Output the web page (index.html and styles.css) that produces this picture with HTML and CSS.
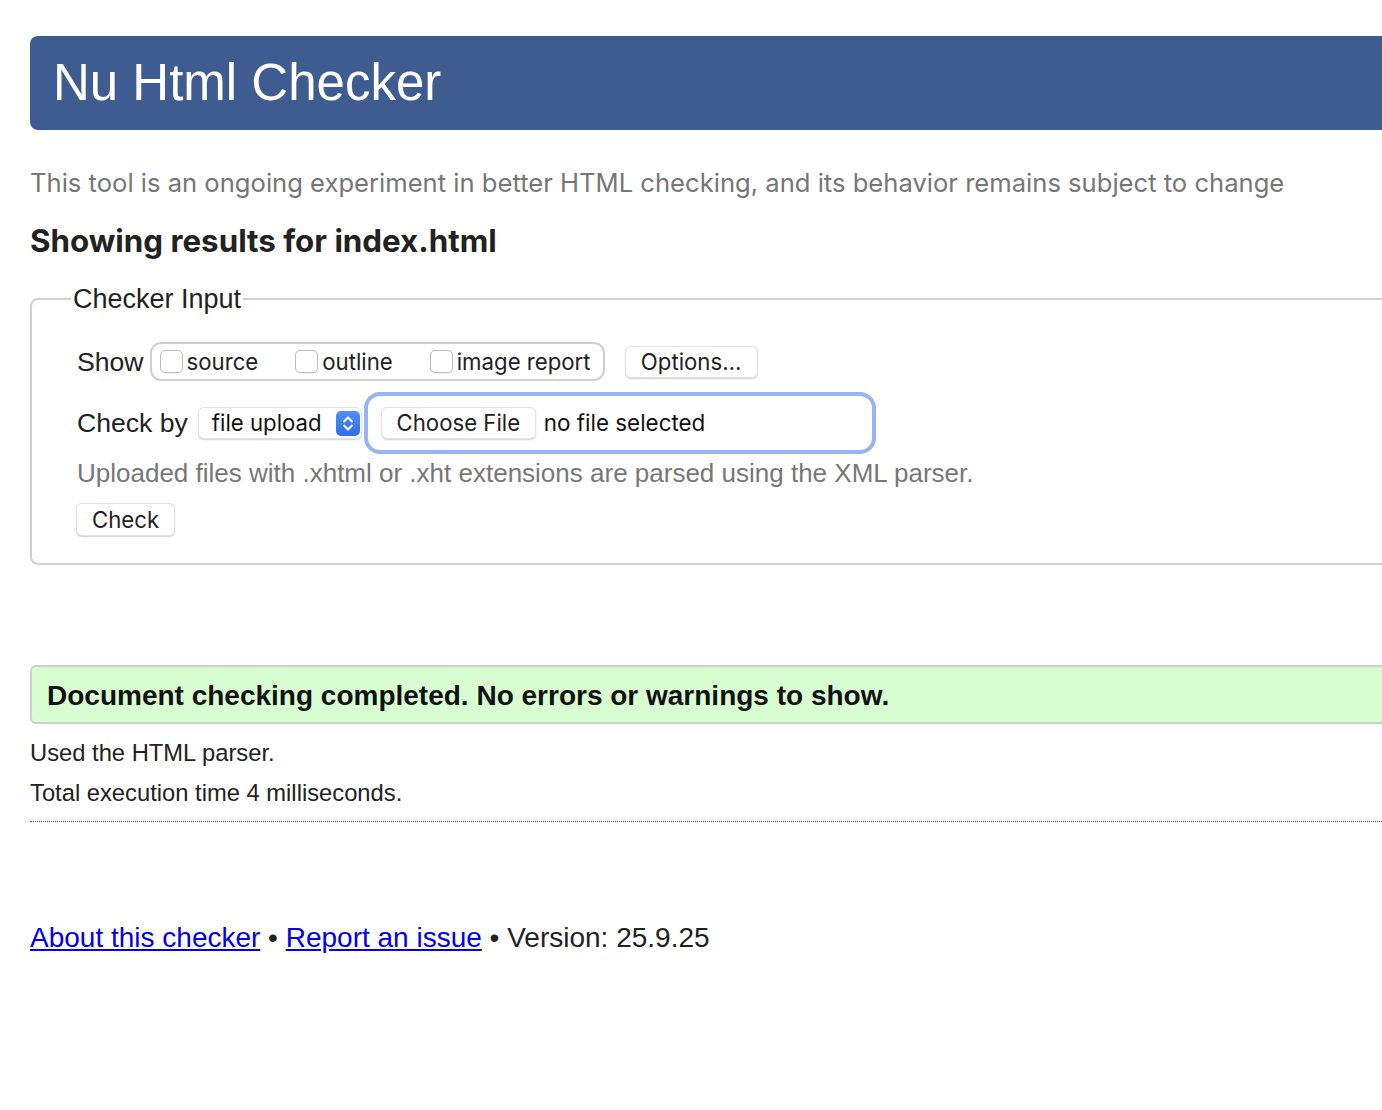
FILE: index.html
```html
<!DOCTYPE html>
<html lang="en">
<head>
<meta charset="utf-8">
<title>Nu Html Checker</title>
<link rel="stylesheet" href="styles.css">
</head>
<body>
<header class="banner"><h1 class="banner-title">Nu Html Checker</h1></header>
<p class="intro">This tool is an ongoing experiment in better HTML checking, and its behavior remains subject to change</p>
<h2 class="results-title">Showing results for index.html</h2>
<form class="checker-form">
  <fieldset class="checker-input">
    <legend class="checker-legend">Checker Input</legend>
    <div class="row show-row">
      <span class="row-label">Show</span>
      <div class="show-group">
        <label class="opt"><input type="checkbox" class="cb">source</label>
        <label class="opt"><input type="checkbox" class="cb">outline</label>
        <label class="opt"><input type="checkbox" class="cb">image report</label>
      </div>
      <button type="button" class="mac-btn options-btn">Options…</button>
    </div>
    <div class="row checkby-row">
      <span class="row-label">Check by</span>
      <div class="mac-select">
        <span class="select-text">file upload</span>
        <span class="select-arrow">
          <svg width="24" height="25" viewBox="0 0 24 25"><path d="M8 10.5 L12 6.5 L16 10.5 M8 14.5 L12 18.5 L16 14.5" fill="none" stroke="#fff" stroke-width="2" stroke-linecap="round" stroke-linejoin="round"/></svg>
        </span>
      </div>
      <div class="file-ring">
        <span class="mac-btn choose-btn">Choose File</span>
        <span class="file-status">no file selected</span>
      </div>
    </div>
    <p class="hint">Uploaded files with .xhtml or .xht extensions are parsed using the XML parser.</p>
    <button type="button" class="mac-btn check-btn">Check</button>
  </fieldset>
</form>
<div class="success"><p class="success-text">Document checking completed. No errors or warnings to show.</p></div>
<p class="meta meta-first">Used the HTML parser.</p>
<p class="meta">Total execution time 4 milliseconds.</p>
<hr class="dotted-rule">
<p class="footer"><a href="#" class="footer-link">About this checker</a> • <a href="#" class="footer-link">Report an issue</a> • Version: 25.9.25</p>
</body>
</html>
```
FILE: styles.css
```css
html {
  overflow: hidden;
  background: #fff;
}
body {
  margin: 0;
  padding: 36px 0 0 30px;
  width: 1420px;
  font-family: "Liberation Sans", Arial, sans-serif;
  color: #222;
}
.banner {
  background: #3e5c8f;
  border-radius: 8px;
  height: 94px;
}
.banner-title {
  margin: 0;
  padding-left: 23px;
  font: 400 51px/94px "Liberation Sans", Arial, sans-serif;
  color: #fff;
}
.intro {
  margin: 38px 0 0;
  font: 400 25.6px/30px Inter, "Noto Sans", sans-serif;
  color: #767676;
}
.results-title {
  margin: 25px 0 0;
  font: 700 31.3px/36px Inter, "Noto Sans", sans-serif;
  color: #222;
}
.checker-form {
  margin: 25px 0 0;
}
.checker-input {
  margin: 0;
  border: 2px solid #cfcfcf;
  border-radius: 8px;
  padding: 28px 0 27px 45px;
  min-width: 0;
}
.checker-legend {
  margin-left: -6px;
  padding: 0 2px;
  font: 400 27px/30px "Liberation Sans", Arial, sans-serif;
  color: #222;
}
.row {
  display: flex;
  align-items: center;
}
.row-label {
  font: 400 26.6px/30px "Liberation Sans", Arial, sans-serif;
  color: #222;
}
.show-row {
  height: 39px;
}
.show-group {
  margin-left: 6px;
  height: 39px;
  box-sizing: border-box;
  border: 2px solid #cfcfcf;
  border-radius: 11px;
  display: flex;
  align-items: center;
  gap: 37px;
  padding: 0 12px 0 8px;
}
.opt {
  display: flex;
  align-items: center;
  font: 400 22.2px/26px Inter, "Noto Sans", sans-serif;
  color: #222;
}
.cb {
  appearance: none;
  -webkit-appearance: none;
  margin: 0 4px 0 0;
  width: 23px;
  height: 23px;
  box-sizing: border-box;
  border: 1px solid #bdbdbd;
  border-radius: 5px;
  background: #fff;
  box-shadow: 0 1px 1px rgba(0,0,0,0.06);
}
.mac-btn {
  display: inline-flex;
  align-items: center;
  box-sizing: border-box;
  height: 32px;
  background: #fff;
  border: 1px solid rgba(0,0,0,0.11);
  border-radius: 6px;
  box-shadow: 0 1px 1.5px rgba(0,0,0,0.18);
  font: 400 22.2px/26px Inter, "Noto Sans", sans-serif;
  color: #222;
  padding: 0 16px;
  margin: 0;
}
.options-btn {
  margin-left: 20px;
  width: 133px;
  justify-content: center;
}
.checkby-row {
  margin-top: 11px;
  height: 62px;
}
.mac-select {
  margin-left: 10px;
  width: 164px;
  height: 32px;
  box-sizing: border-box;
  display: flex;
  align-items: center;
  justify-content: space-between;
  padding: 0 1px 0 13px;
  background: #fff;
  border: 1px solid rgba(0,0,0,0.11);
  border-radius: 6px;
  box-shadow: 0 1px 1.5px rgba(0,0,0,0.18);
  font: 400 22.2px/26px Inter, "Noto Sans", sans-serif;
  color: #111;
}
.select-arrow {
  display: flex;
  width: 24px;
  height: 25px;
  border-radius: 5px;
  background: linear-gradient(#4f8ff8, #2d6ee6);
}
.file-ring {
  margin-left: 2px;
  width: 512px;
  height: 62px;
  box-sizing: border-box;
  border: 4px solid #98b3f4;
  border-radius: 16px;
  display: flex;
  align-items: center;
  padding-left: 13px;
  gap: 8px;
}
.choose-btn {
  width: 155px;
  justify-content: center;
  padding: 0;
}
.file-status {
  font: 400 22.4px/26px Inter, "Noto Sans", sans-serif;
  color: #111;
}
.hint {
  margin: 4px 0 0;
  font: 400 26px/30px "Liberation Sans", Arial, sans-serif;
  color: #777;
}
.check-btn {
  margin-top: 15px;
  margin-left: -1px;
  width: 99px;
  height: 33px;
  justify-content: center;
  padding: 0;
}
.success {
  margin-top: 100px;
  background: #d8fdd1;
  border: 2px solid #cfcfcf;
  border-radius: 6px;
  padding: 11px 15px 9px;
}
.success-text {
  margin: 0;
  font: 700 28px/35px "Liberation Sans", Arial, sans-serif;
  color: #111;
}
.meta {
  margin: 10px 0 0;
  font: 400 23.75px/30px "Liberation Sans", Arial, sans-serif;
  color: #222;
}
.meta-first {
  margin-top: 14px;
}
.dotted-rule {
  margin: 13px 0 0;
  border: 0;
  border-top: 1px dotted #555;
  height: 0;
}
.footer {
  margin: 99px 0 0;
  font: 400 28px/34px "Liberation Sans", Arial, sans-serif;
  color: #222;
}
.footer-link {
  color: #0000ee;
  text-decoration: underline;
}
```
